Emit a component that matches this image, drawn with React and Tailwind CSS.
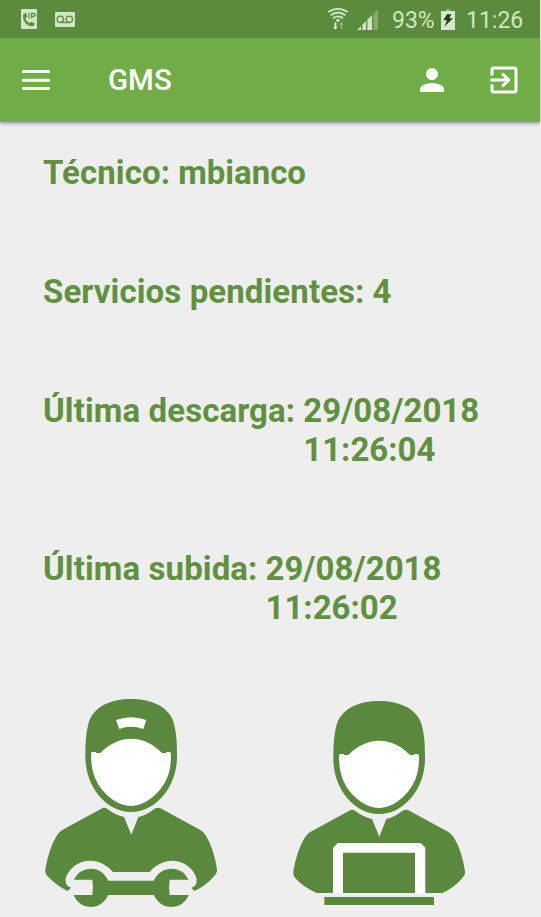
import React from 'react';

const PhoneIpIcon = () => (
    <svg className="w-4 h-5" viewBox="0 0 48 60">
        <rect width="48" height="60" rx="3" fill="#d3e6c3" />
        <path
            d="M7 16 C10 12 14 12 16 14 L18 23 L13 28 C15 35 20 40 26 43 L31 38 L40 42 C42 46 38 52 33 52 C16 52 3 34 7 16 Z"
            fill="#5b8b3c"
        />
        <path d="M24 11 V28 M32 28 V13 H38 Q43 13 43 17.500 Q43 22 38 22 H32" fill="none" stroke="#5b8b3c" strokeWidth="4" />
    </svg>
);

const VoicemailIcon = () => (
    <svg className="w-5 h-[15px]" viewBox="0 0 60 45">
        <rect width="60" height="45" rx="2" fill="#d3e6c3" />
        <g fill="none" stroke="#5b8b3c" strokeWidth="4">
            <circle cx="16" cy="22" r="9.500" />
            <circle cx="43" cy="22" r="9.500" />
            <path d="M16 31.500 H43" />
        </g>
    </svg>
);

const WifiIcon = () => (
    <svg className="w-5 h-[22px]" viewBox="0 0 60 66">
        <g fill="none" stroke="#d3e6c3" strokeWidth="5.500">
            <path d="M1 12 Q30 -7 59 12" />
            <path d="M8 22 Q30 5 52 22" />
            <path d="M15 31 Q30 19 45 31" />
        </g>
        <path d="M23 36 Q30 30 37 36 L30 43 Z" fill="#d3e6c3" />
        <path d="M20 43 H25 V56 H29 L22 65 L15 56 H20 Z" fill="#e4f0da" />
        <path d="M38 63 H43 V50 H47 L40 41 L33 50 H38 Z" fill="#91b477" />
    </svg>
);

const SignalIcon = () => (
    <svg className="w-[21px] h-[21px]" viewBox="0 0 63 63">
        <path d="M0 63 L12 52 V63 Z M16 63 V47 L27 36 V63 Z M31 63 V32 L45 18 V63 Z" fill="#d3e6c3" />
        <path d="M49 63 V14 L63 0 V63 Z" fill="#86ab6d" />
    </svg>
);

const BatteryIcon = () => (
    <svg className="w-3.5 h-[21px]" viewBox="0 0 42 63">
        <path d="M15 0 H28 V6 H15 Z" fill="#8fb275" />
        <path d="M0 6 H42 V63 H0 Z" fill="#d8e8cb" />
        <path d="M18 16 H31 L25 28 H36 L10 53 L18 34 H7 Z" fill="#263a1a" />
    </svg>
);

const MenuIcon = () => (
    <svg className="w-7 h-[21px]" viewBox="0 0 28 21">
        <path d="M0 0 H28 V3 H0 Z M0 8.750 H28 V11.750 H0 Z M0 17 H28 V20 H0 Z" fill="#fff" />
    </svg>
);

const PersonIcon = () => (
    <svg className="w-9 h-9" viewBox="0 0 24 24" fill="#fff">
        <path d="M12 12c2.210 0 4-1.790 4-4s-1.790-4-4-4-4 1.790-4 4 1.790 4 4 4zm0 2c-2.670 0-8 1.340-8 4v2h16v-2c0-2.660-5.330-4-8-4z" />
    </svg>
);

const ExitIcon = () => (
    <svg className="w-9 h-9" viewBox="0 0 24 24" fill="#fff">
        <path d="M10.090 15.590L11.500 17l5-5-5-5-1.410 1.410L12.670 11H3v2h9.670l-2.580 2.590zM19 3H5c-1.110 0-2 .9-2 2v4h2V5h14v14H5v-4H3v4c0 1.100.89 2 2 2h14c1.100 0 2-.9 2-2V5c0-1.100-.9-2-2-2z" />
    </svg>
);

// Head and cap, shared by both workers
const Head = () => (
    <>
        <path
            d="M303 42 C362 42 410 63 428 104 C438 132 441 165 441 215 C441 305 378 381 303 381 C228 381 166 305 166 215 C166 165 169 132 179 104 C197 63 244 42 303 42 Z"
            fill="#5a883d"
        />
        <path
            d="M187 201 H198 V204 H211 C235 178 269 161 303 161 C340 161 372 178 396 204 H408 V201 H419 Q423 201 423 208 C423 245 418 270 402 297 C380 333 341 363 303 363 C265 363 226 333 204 297 C188 270 183 240 183 206 Q183 201 187 201 Z"
            fill="#fff"
        />
    </>
);

const MechanicIcon = () => (
    <svg className="w-[200px] h-[232px]" viewBox="0 0 600 696">
        <Head />
        <path d="M258 105 Q303 89 349 105 L340 132 Q303 119 268 132 Z" fill="#fff" />
        <path
            d="M218 369 Q225 367 231 371 Q255 389 282 396 L304 449 L325 396 Q351 389 374 371 Q381 367 390 369 L510 434 Q522 441 528 452 Q552 492 561 553 Q563 562 556 569 Q530 601 493 618 L484 608 L495 603 Q501 593 500 582 C493 552 463 527 428 527 C402 527 376 540 359 561 H249 C231 540 207 527 181 527 C145 527 116 550 107 580 Q105 594 112 602 L123 608 L113 618 Q80 603 49 570 Q44 563 46 553 Q56 492 80 452 Q87 440 98 434 Z"
            fill="#5a883d"
        />
        <path
            d="M131 584 Q150 551 182 551 C206 551 224 564 235 587 H371 C382 564 401 551 426 551 Q458 551 476 584 H419 Q415 607 419 630 H477 Q459 666 426 666 C400 666 382 652 371 630 H235 C224 652 206 666 181 666 Q148 666 130 630 H187 Q191 607 187 584 Z"
            fill="#5a883d"
        />
    </svg>
);

const OperatorIcon = () => (
    <svg className="w-[200px] h-[232px]" viewBox="0 0 600 696">
        <g transform="translate(-6 6)">
            <Head />
        </g>
        <path
            d="M212 375 Q219 373 225 377 Q249 395 276 402 L298 455 L319 402 Q345 395 368 377 Q375 373 384 375 L504 440 Q516 447 522 458 Q546 498 555 559 Q557 568 550 575 Q527 605 487 624 H110 Q67 605 43 576 Q38 569 40 559 Q50 498 74 458 Q81 446 92 440 Z"
            fill="#5a883d"
        />
        <path d="M159 624 V488 L173 474 H422 L436 488 V624 H405 V503 H189 V624 Z" fill="#fff" />
        <path d="M133 636 H462 V660 H133 Z" fill="#5a883d" />
    </svg>
);

const InfoRow = ({ label, children }) => (
    <div className="flex gap-2">
        <span className="tracking-[0.1px]">{label}</span>
        <span>{children}</span>
    </div>
);

const App = () => {
    return (
        <div className="w-[541px] h-[917px] overflow-hidden flex flex-col bg-[#eeeeee] font-['Roboto',sans-serif]">
            {/* Status bar */}
            <div className="relative z-10 w-[540px] h-[38px] shrink-0 bg-[#5b8b3c] flex items-center text-[#d3e6c3] text-[23px] leading-none">
                <div className="flex items-center gap-[18px] pl-[21px]">
                    <PhoneIpIcon />
                    <VoicemailIcon />
                </div>
                <div className="flex items-center ml-auto pr-[17px]">
                    <WifiIcon />
                    <div className="pl-[9px] pr-[14px]"><SignalIcon /></div>
                    <span className="w-[49px] whitespace-nowrap pt-0.5">93%</span>
                    <BatteryIcon />
                    <span className="w-[68px] pl-[11px] pt-0.5">11:26</span>
                </div>
            </div>

            {/* Toolbar */}
            <div className="w-[540px] h-[84px] shrink-0 bg-[#70ad47] flex items-center pl-[22px] pr-[18px] text-white shadow-[0_2px_3px_rgba(0,0,0,0.3)]">
                <MenuIcon />
                <h1 className="pl-[58px] pt-0.5 text-[29.5px] font-medium leading-none">GMS</h1>
                <div className="flex gap-9 ml-auto">
                    <PersonIcon />
                    <ExitIcon />
                </div>
            </div>

            {/* Summary */}
            <div className="flex flex-col gap-20 pt-[31px] pl-[43px] text-[33px] leading-[39px] font-bold text-[#5f913f] whitespace-nowrap">
                <InfoRow label="Técnico:">mbianco</InfoRow>
                <InfoRow label="Servicios pendientes:">4</InfoRow>
                <InfoRow label="Última descarga:">29/08/2018<br />11:26:04</InfoRow>
                <InfoRow label="Última subida:">29/08/2018<br />11:26:02</InfoRow>
            </div>

            {/* Actions */}
            <div className="flex gap-[50px] pl-[30px] mt-auto">
                <MechanicIcon />
                <OperatorIcon />
            </div>
        </div>
    );
};

export default App;
